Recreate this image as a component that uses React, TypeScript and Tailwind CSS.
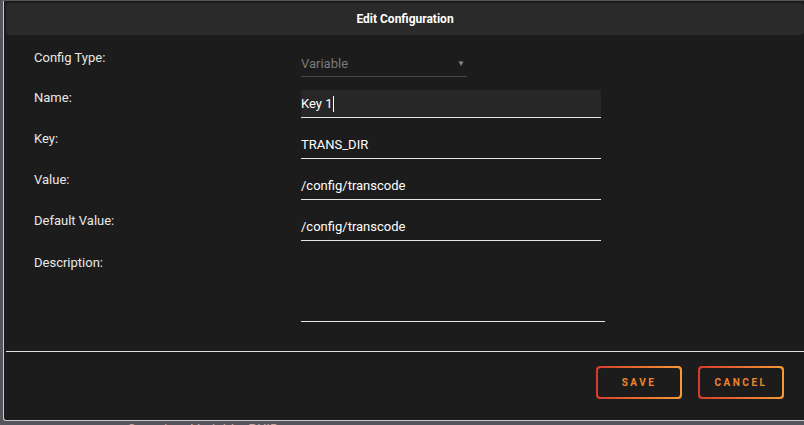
import React from "react";

const font = { fontFamily: "Roboto, 'Noto Sans', 'Liberation Sans', sans-serif" };

function Row({ label, children, top }: { label: string; children: React.ReactNode; top?: string }) {
  return (
    <div className={`flex h-[28px] ${top ?? ""}`}>
      <div className="w-[295px] shrink-0 pl-[28px] text-[13px] leading-[16px] text-[#e8e8e8]">{label}</div>
      {children}
    </div>
  );
}

function TextInput({ value, filled, cursor }: { value: string; filled?: boolean; cursor?: boolean }) {
  return (
    <div
      className={`flex h-[28px] w-[300px] items-center border-b border-[#e6e6e6] text-[13px] leading-[16px] text-white ${
        filled ? "bg-[#272727]" : ""
      }`}
    >
      <span>{value}</span>
      {cursor && <span className="ml-[1px] inline-block h-[16px] w-[1px] bg-white" />}
    </div>
  );
}

export default function App() {
  return (
    <div className="relative h-[425px] w-[804px] overflow-hidden bg-[#54555c]" style={font}>
      <div className="ml-[3px] mt-[1px] h-[420px] w-[801px] rounded-bl-[3px] border-b border-l border-[#c8c8c8] bg-[#1c1c1c] pl-[2px] pt-[2px]">
        <div className="flex h-[32px] items-center justify-center rounded-[4px] bg-[#2a2a2a] text-[12px] font-bold text-white">
          Edit Configuration
        </div>
        <div className="pt-[15px]">
          <Row label="Config Type:">
            <div className="flex h-[27px] w-[166px] items-center justify-between border-b border-[#4a4a4a] pt-[2px] text-[13px] text-[#7a7a7a]">
              <span>Variable</span>
              <span className="mr-[2px] text-[8px] text-[#8a8a8a]">▼</span>
            </div>
          </Row>
          <Row label="Name:" top="mt-[12px]">
            <TextInput value="Key 1" filled cursor />
          </Row>
          <Row label="Key:" top="mt-[13px]">
            <TextInput value="TRANS_DIR" />
          </Row>
          <Row label="Value:" top="mt-[13px]">
            <TextInput value="/config/transcode" />
          </Row>
          <Row label="Default Value:" top="mt-[13px]">
            <TextInput value="/config/transcode" />
          </Row>
          <div className="mt-[13px] flex h-[68px]">
            <div className="w-[295px] shrink-0 pl-[28px] pt-[1px] text-[13px] leading-[16px] text-[#e8e8e8]">Description:</div>
            <div className="h-[68px] w-[304px] border-b border-[#e6e6e6]" />
          </div>
        </div>
        <div className="mt-[29px] h-[1px] bg-[#e0e0e0]" />
        <div className="flex justify-end gap-[16px] pr-[20px] pt-[14px]">
          <button className="rounded-[4px] bg-gradient-to-r from-[#d63a2b] to-[#f59a36] p-[2px]">
            <span className="flex h-[29px] w-[82px] items-center justify-center rounded-[3px] bg-[#1c1c1c] text-[10px] font-bold tracking-[2.5px] text-[#f0842e]">
              SAVE
            </span>
          </button>
          <button className="rounded-[4px] bg-gradient-to-r from-[#d63a2b] to-[#f59a36] p-[2px]">
            <span className="flex h-[29px] w-[82px] items-center justify-center rounded-[3px] bg-[#1c1c1c] text-[10px] font-bold tracking-[2.5px] text-[#f0842e]">
              CANCEL
            </span>
          </button>
        </div>
      </div>
      <div className="mt-[1px] pl-[127px] text-[14px] leading-[16px] text-[#c9aaa4]">Container Variable: PUID</div>
    </div>
  );
}
